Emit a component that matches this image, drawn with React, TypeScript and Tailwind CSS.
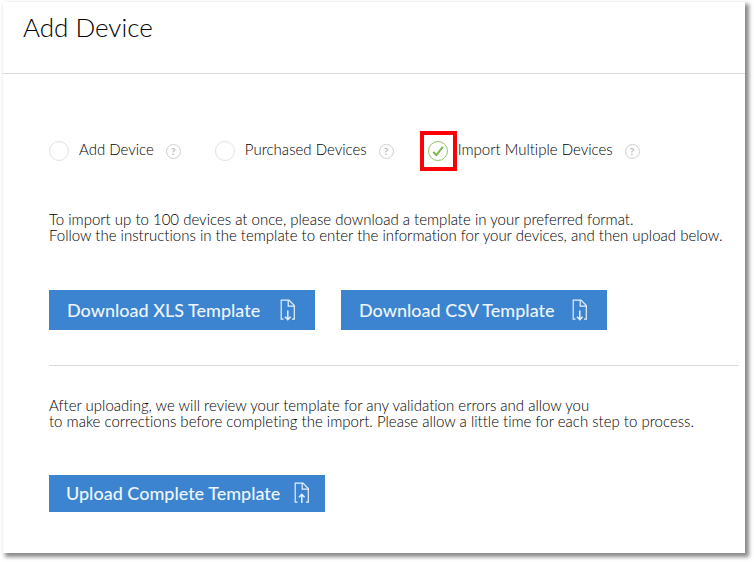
import React from "react";

function HelpIcon({ topic }: { topic: string }) {
  return (
    <button
      type="button"
      aria-label={"Help: " + topic}
      className="flex size-[15px] shrink-0 items-center justify-center rounded-full border border-[#cfcfcf] text-[10px] leading-none font-black text-[#bdbdbd]"
    >
      ?
    </button>
  );
}

function Option({ id, label, checked = false }: { id: string; label: string; checked?: boolean }) {
  return (
    <div className="flex items-center gap-3">
      <div className="flex items-center gap-2.5">
        <span className="relative flex size-5 shrink-0">
          <input
            type="radio"
            id={id}
            name="mode"
            defaultChecked={checked}
            className="peer size-5 appearance-none rounded-full border border-[#e2e2e2] bg-white checked:border-[#8cc665]"
          />
          <svg
            viewBox="0 0 20 20"
            className="pointer-events-none absolute inset-0 hidden size-5 peer-checked:block"
            fill="none"
            stroke="#79b94f"
            strokeWidth="2"
          >
            <path d="M5.2 11 8.4 14 14.8 5.8" />
          </svg>
          {checked && (
            <span className="pointer-events-none absolute -inset-x-2 -inset-y-2.5 -right-[9px] border-4 border-[#fb0007]" />
          )}
        </span>
        <label htmlFor={id} className="pb-1 text-[15px] leading-4 whitespace-nowrap">
          {label}
        </label>
      </div>
      <HelpIcon topic={label} />
    </div>
  );
}

function FileIcon({ up = false }: { up?: boolean }) {
  return (
    <svg viewBox="0 0 16 22" className="h-[22px] w-4 shrink-0" fill="none" stroke="#e6f0fa" strokeWidth="1.2">
      <path d="M3.5 20.2H1.2V1.2H9L14.3 6.5V20.2H12" />
      <path d="M8.2 1.2V7.2H14.3" />
      {up ? (
        <path d="M7.8 21V12.5M5 15.2 7.8 12.4 10.6 15.2" strokeWidth="1.5" />
      ) : (
        <path d="M7.8 11.5V20.5M5 17.8 7.8 20.6 10.6 17.8" strokeWidth="1.5" />
      )}
    </svg>
  );
}

const button =
  "flex items-center justify-between bg-[#3c84d0] text-lg leading-6 font-medium whitespace-nowrap text-[#eef5fc]";
const downloadButton = button + " h-10 w-[266px] pr-[19px] pl-[18px]";

export default function App() {
  return (
    <main className="pt-0.5 pr-[9px] pb-[9px] pl-[3px] font-['Lato',sans-serif] font-light text-black [font-variant-ligatures:none]">
      <section className="bg-white pb-[41px] shadow-[3px_3px_4px_1px_#8a8a8a]">
        <header className="border-b border-[#dadada] pt-2 pb-7 pl-5">
          <h1 className="text-[26px] leading-[35px]">Add Device</h1>
        </header>
        <div className="pt-[67px] pr-1.5 pl-[46px]">
          <div role="radiogroup" aria-label="Device source" className="flex items-center gap-[34px]">
            <Option id="add" label="Add Device" />
            <Option id="purchased" label="Purchased Devices" />
            <Option id="import" label="Import Multiple Devices" checked />
          </div>
          <p className="mt-[50px] text-[15px] leading-4">
            To import up to 100 devices at once, please download a template in your preferred format.
            <br />
            Follow the instructions in the template to enter the information for your devices, and then upload below.
          </p>
          <div className="mt-[47px] flex gap-[26px]">
            <button type="button" className={downloadButton}>
              Download XLS Template
              <FileIcon />
            </button>
            <button type="button" className={downloadButton}>
              Download CSV Template
              <FileIcon />
            </button>
          </div>
          <hr className="mt-[35px] border-[#dadada]" />
          <p className="mt-[31px] text-[15px] leading-4">
            After uploading, we will review your template for any validation errors and allow you
            <br />
            to make corrections before completing the import. Please allow a little time for each step to process.
          </p>
          <button type="button" className={button + " mt-[46px] h-[37px] w-[276px] pr-[15px] pb-0.5 pl-[17px]"}>
            Upload Complete Template
            <FileIcon up />
          </button>
        </div>
      </section>
    </main>
  );
}
